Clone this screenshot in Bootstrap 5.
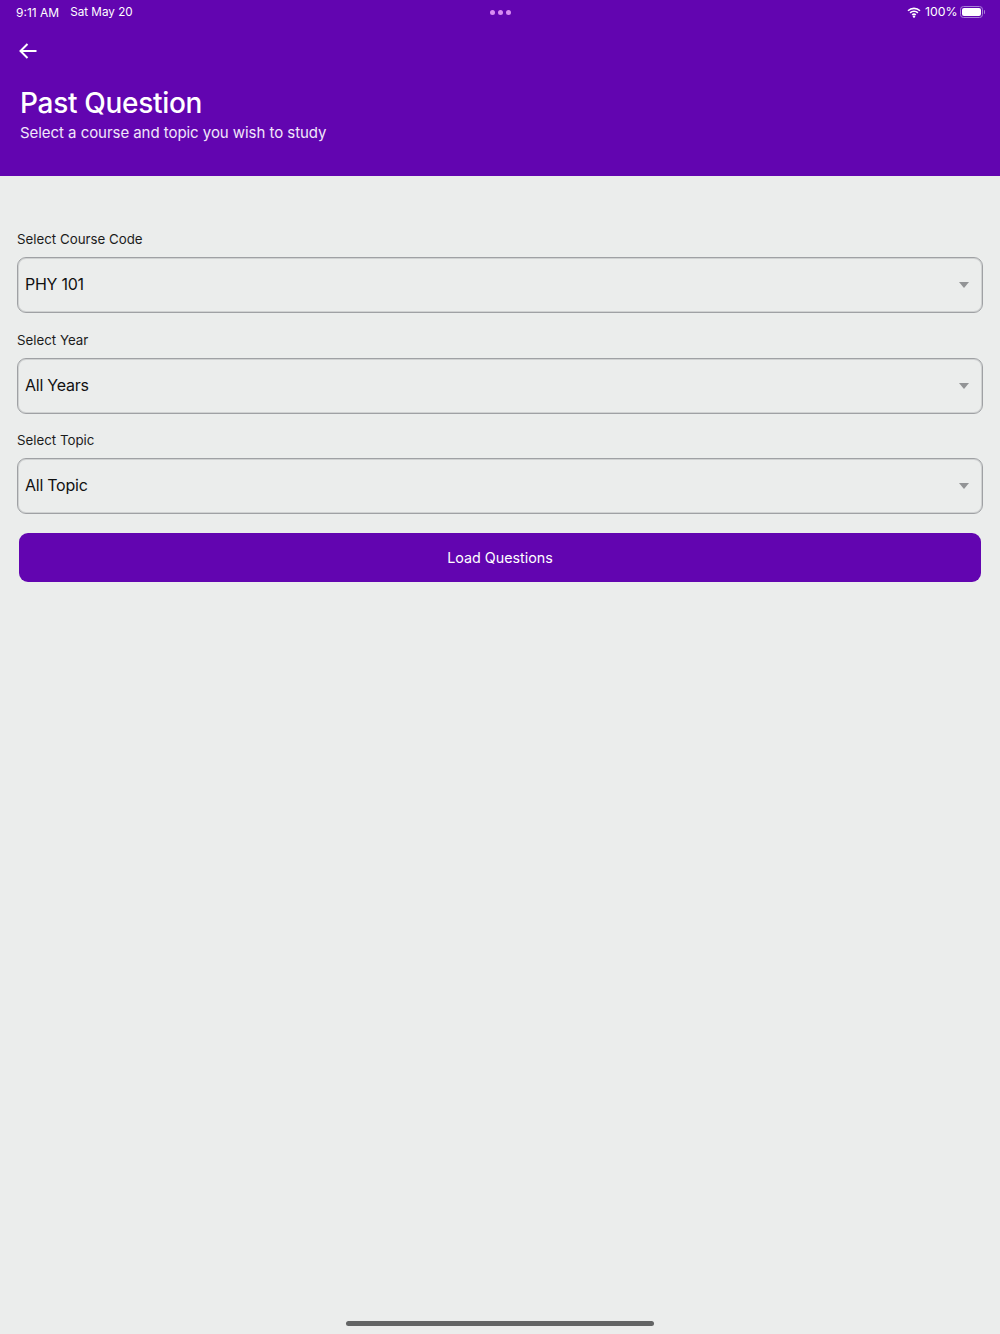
<!DOCTYPE html>
<html lang="en">
<head>
<meta charset="utf-8">
<title>Past Question</title>
<link href="https://cdn.jsdelivr.net/npm/bootstrap@5.3.0/dist/css/bootstrap.min.css" rel="stylesheet">
<style>
html, body { height: 100%; }
body { background: #ebedec; font-family: Inter, "Liberation Sans", sans-serif; color: #111; }
.screen { height: 1334px; width: 1000px; overflow: hidden; }
.hero { background: #6205b0; height: 176px; color: #fff; padding: 0 16px 0 20px; }
.status-row { height: 24px; margin-left: -4px; margin-right: -1px; font-size: 12px; font-weight: 400; }
.status-side { width: 300px; }
.status-clock { padding-top: 1px; }
.status-date { font-size: 11.7px; margin-left: 11px; }
.dots { gap: 3px; }
.dots i { display: block; width: 5px; height: 5px; border-radius: 50%; background: #d88cf2; }
.wifi { margin-right: 4px; }
.pct { font-size: 12.3px; margin-right: 2px; }
.batt { width: 23px; height: 12px; border: 1px solid #a87fd8; border-radius: 3.5px; padding: 1px; }
.batt b { display: block; width: 100%; height: 100%; background: #fff; border-radius: 2px; }
.batt-tip { width: 1.5px; height: 4px; background: #a87fd8; margin-left: 1px; border-radius: 0 1px 1px 0; }
.back-row { height: 30px; margin-top: 12px; margin-left: -1px; }
.hero-title { font-size: 28px; font-weight: 500; line-height: 34px; margin: 20px 0 0; letter-spacing: -.3px; }
.hero-sub { font-size: 15px; line-height: 24px; margin: 1px 0 0; color: #f1e6fa; letter-spacing: -.05px; }
.form-zone { padding: 53px 17px 0; }
.field-label { display: block; font-size: 13.3px; line-height: 20px; height: 20px; margin: 0 0 8px; color: #1c1c1c; }
.field-box { height: 56px; border: 1px solid #9fa1a4; box-shadow: inset 0 0 0 1px rgba(159,161,164,.35); border-radius: 9px; padding: 0 13px 2px 7px; font-size: 16px; letter-spacing: -.25px; color: #111; margin-bottom: 16.5px; }
.caret-mark { width: 0; height: 0; border-left: 5px solid transparent; border-right: 5px solid transparent; border-top: 6px solid #929496; margin-top: 2px; }
.load-btn { display: block; width: 962px; height: 49px; margin: 19px auto 0; background: #6205b0; border: 0; border-radius: 9px; color: #fff; font-size: 14.3px; letter-spacing: 0; }
.load-btn:hover { background: #6205b0; color: #fff; }
.home-bar { position: absolute; left: 346px; bottom: 8px; width: 308px; height: 5px; border-radius: 3px; background: #636565; }
</style>
</head>
<body>
<div class="screen position-relative">
  <header class="hero">
    <div class="status-row d-flex align-items-center justify-content-between">
      <div class="status-side status-clock d-flex"><span>9:11 AM</span><span class="status-date">Sat May 20</span></div>
      <div class="dots d-flex"><i></i><i></i><i></i></div>
      <div class="status-side d-flex align-items-center justify-content-end">
        <svg class="wifi" width="14" height="11" viewBox="0 0 14 11"><path d="M1 3.8a8.6 8.6 0 0 1 12 0M3.1 5.9a5.6 5.6 0 0 1 7.8 0M5.2 7.9a2.6 2.6 0 0 1 3.6 0" fill="none" stroke="#fff" stroke-width="1.6"/><circle cx="7" cy="9.6" r="1.2" fill="#fff"/></svg>
        <span class="pct">100%</span>
        <span class="batt"><b></b></span><span class="batt-tip"></span>
      </div>
    </div>
    <div class="back-row d-flex align-items-center">
      <svg width="18" height="16" viewBox="0 0 18 16"><path d="M17.5 8H1.8M8.5 1L1.5 8l7 7" fill="none" stroke="#fff" stroke-width="2"/></svg>
    </div>
    <h1 class="hero-title">Past Question</h1>
    <p class="hero-sub">Select a course and topic you wish to study</p>
  </header>
  <main class="form-zone">
    <label class="field-label">Select Course Code</label>
    <div class="field-box d-flex align-items-center justify-content-between"><span>PHY 101</span><span class="caret-mark"></span></div>
    <label class="field-label">Select Year</label>
    <div class="field-box d-flex align-items-center justify-content-between"><span>All Years</span><span class="caret-mark"></span></div>
    <label class="field-label">Select Topic</label>
    <div class="field-box d-flex align-items-center justify-content-between"><span>All Topic</span><span class="caret-mark"></span></div>
    <button type="button" class="btn load-btn">Load Questions</button>
  </main>
  <div class="home-bar"></div>
</div>
<script src="https://cdn.jsdelivr.net/npm/bootstrap@5.3.0/dist/js/bootstrap.bundle.min.js"></script>
</body>
</html>
